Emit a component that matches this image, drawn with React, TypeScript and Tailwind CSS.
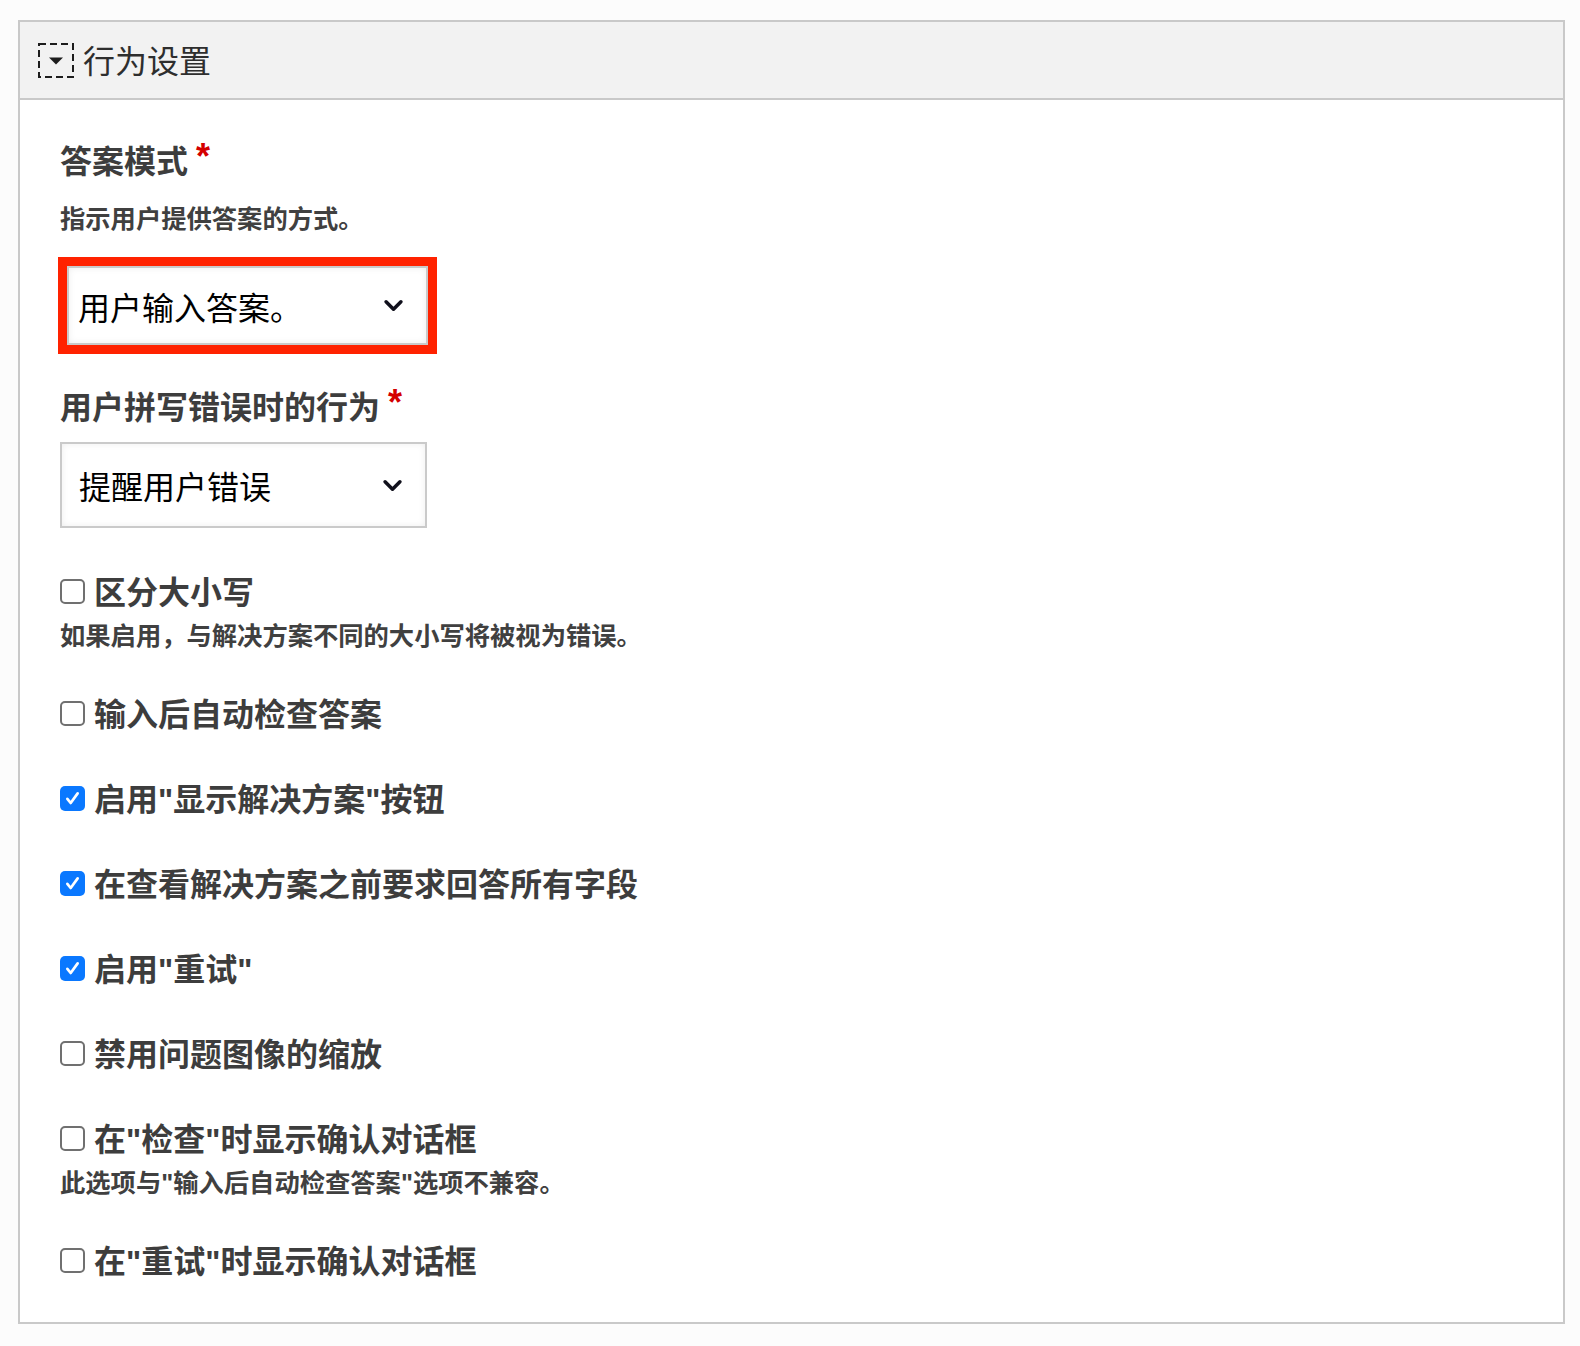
import { ReactNode } from 'react'

const options = [
  { label: '区分大小写', hint: '如果启用，与解决方案不同的大小写将被视为错误。' },
  { label: '输入后自动检查答案' },
  { label: '启用"显示解决方案"按钮', checked: true },
  { label: '在查看解决方案之前要求回答所有字段', checked: true },
  { label: '启用"重试"', checked: true },
  { label: '禁用问题图像的缩放' },
  { label: '在"检查"时显示确认对话框', hint: '此选项与"输入后自动检查答案"选项不兼容。' },
  { label: '在"重试"时显示确认对话框' },
]

// straight quotes in a narrower latin face, like the original
function quoted(text: string) {
  const parts = text.split('"')
  return parts.map((p, i) => (
    <span key={i}>
      {i > 0 && <span className="font-['Liberation_Sans',sans-serif] leading-none">"</span>}
      {p}
    </span>
  ))
}

function Chevron() {
  return (
    <svg viewBox="0 0 22 14" className="h-[13px] w-[21px] shrink-0" fill="none" stroke="#10101c" strokeWidth={3.8} strokeLinecap="round" strokeLinejoin="round">
      <path d="M3 3l8 8 8-8" />
    </svg>
  )
}

function Select({ value, className }: { value: string; className: string }) {
  return (
    <div
      className={`flex items-center justify-between border-2 border-[#cacaca] bg-white pr-[22px] text-[32px] text-black shadow-[inset_0_0_7px_rgba(0,0,0,0.07)] ${className}`}
    >
      <span>{value}</span>
      <Chevron />
    </div>
  )
}

function Label({ children }: { children: ReactNode }) {
  return (
    <div className="flex items-start text-[32px] font-bold leading-[40px] text-[#3d3d3d]">
      {children}
      <span className="ml-[8px] font-['Liberation_Sans',sans-serif] text-[36px] leading-[36px] text-[#d40000]">*</span>
    </div>
  )
}

function Box({ checked }: { checked?: boolean }) {
  if (checked) {
    return (
      <span className="flex size-[25px] shrink-0 translate-y-[1px] items-center justify-center rounded-[5px] bg-[#0a78ff]">
        <svg viewBox="0 0 24 24" className="size-[19px]" fill="none" stroke="white" strokeWidth={3.4} strokeLinecap="round" strokeLinejoin="round">
          <path d="M5.5 12.5l4.2 5.2L18.5 5.5" />
        </svg>
      </span>
    )
  }
  return <span className="size-[25px] shrink-0 translate-y-[1px] rounded-[5px] border-2 border-[#707070] bg-white" />
}

export default function App() {
  return (
    <div className="min-h-[1346px] bg-[#fcfcfc] pt-[20px] pl-[18px] font-['Noto_Sans_CJK_SC',sans-serif]">
      <div className="w-[1547px] border-2 border-[#c9c9c9] bg-white">
        <div className="flex h-[78px] items-center gap-[9px] border-b-2 border-[#c9c9c9] bg-[#f2f2f2] pl-[18px]">
          <svg viewBox="0 0 36 35" className="h-[35px] w-[36px]" fill="none">
            <rect x="1" y="1" width="34" height="33" stroke="#1d1d1d" strokeWidth={2} strokeDasharray="7 4" />
            <path d="M11 14.5h14l-7 7z" fill="#1d1d1d" />
          </svg>
          <span className="-translate-y-[1px] text-[32px] leading-[40px] text-[#2e2e2e]">行为设置</span>
        </div>

        <div className="flex flex-col pt-[39px] pb-[43px] pl-[40px]">
          <Label>答案模式</Label>
          <p className="mt-[22px] text-[25.3px] font-semibold leading-[32px] text-[#404040]">指示用户提供答案的方式。</p>
          <div className="mt-[24px] -ml-[2px] w-fit border-[9px] border-[#ff2200]">
            <Select value="用户输入答案。" className="h-[79px] w-[361px] pl-[9px]" />
          </div>

          <div className="mt-[31px]">
            <Label>用户拼写错误时的行为</Label>
          </div>
          <Select value="提醒用户错误" className="mt-[17px] h-[86px] w-[367px] pl-[17px]" />

          <div className="mt-[42px] flex flex-col gap-[45px]">
            {options.map((o) => (
              <div key={o.label}>
                <label className="flex h-[40px] items-center gap-[9px] text-[32px] font-bold text-[#3d3d3d]">
                  <Box checked={o.checked} />
                  <span className="leading-[40px]">{quoted(o.label)}</span>
                </label>
                {o.hint && (
                  <p className="mt-[12px] h-[25px] text-[25.3px] font-semibold leading-[25px] text-[#404040]">{quoted(o.hint)}</p>
                )}
              </div>
            ))}
          </div>
        </div>
      </div>
    </div>
  )
}
